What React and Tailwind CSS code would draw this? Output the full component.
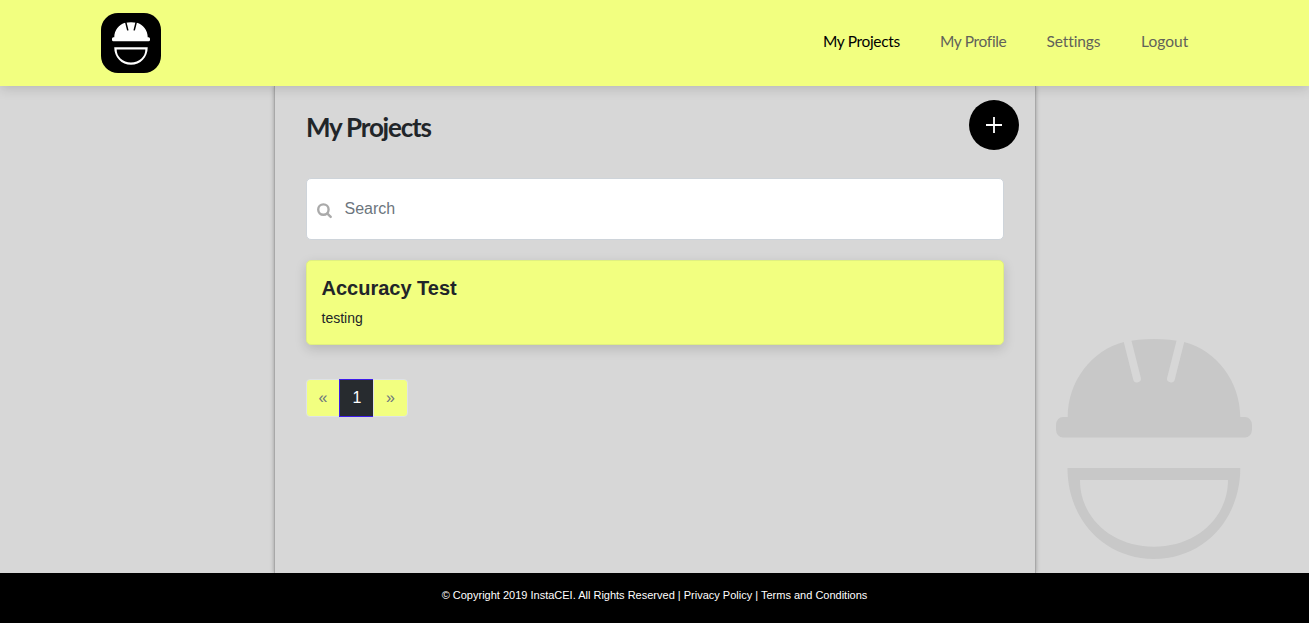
import React from "react";

const NAV = [
  { label: "My Projects", style: "w-[77px] text-black tracking-[-0.350px]" },
  { label: "My Profile", style: "w-[66.500px] text-[#61625a] tracking-[-0.350px]" },
  { label: "Settings", style: "w-[54.500px] text-[#61625a] tracking-[-0.100px]" },
  { label: "Logout", style: "w-[48px] text-[#61625a] tracking-[0.050px]" },
];

function Helmet({ className, slit }) {
  return (
    <svg viewBox="0 0 196 220" className={className} fill="currentColor" aria-hidden="true">
      <path d="M11.700 78C11.700 42 36 11 68 3Q82 0 98 0T128 3C160 11 184.300 42 184.300 78H189a7 8 0 0 1 7 8v4.500a7 8 0 0 1-7 8H7a7 8 0 0 1-7-8V86a7 8 0 0 1 7-8Z" />
      <path d="M70 -4 81 39.500M126 -4 115 39.500" fill="none" stroke={slit} strokeWidth="7.800" strokeLinecap="round" />
      <path fillRule="evenodd" d="M11.500 129H184.300C184.300 181 147 220 98 220S11.500 181 11.500 129ZM24 141C24 179 56 207.700 98 207.700S172 179 172 141Z" />
    </svg>
  );
}

export default function App() {
  return (
    <div className="flex h-[623px] flex-col overflow-hidden bg-[#d7d7d7] font-['Liberation_Sans',sans-serif] text-[#212529]">
      <header className="relative z-10 flex h-[86px] shrink-0 items-center justify-between bg-[#f2ff80] pr-[120px] pl-[101px] shadow-[0_2px_12px_rgba(0,0,0,0.16)]">
        <a className="flex size-[60px] items-center justify-center rounded-[17px] bg-black text-white">
          <Helmet className="h-[43px] w-[38px]" slit="#000" />
        </a>
        <nav className="flex gap-[40px] pb-[4px] font-['Lato',sans-serif] text-[15.500px] leading-6 whitespace-nowrap">
          {NAV.map((item) => (
            <a key={item.label} className={item.style}>{item.label}</a>
          ))}
        </nav>
      </header>

      <div className="flex min-h-0 flex-1">
        <div className="w-[274px] shrink-0" />
        <main className="w-[762px] shrink-0 border-x border-[#a8a8a8] pr-[31px] pl-[31px] shadow-[0_0_4px_rgba(0,0,0,0.28)]">
          <div className="-mr-[15px] flex h-[92px] items-start justify-between">
            <h1 className="pt-[23px] font-['Lato',sans-serif] text-[26px] leading-[36px] font-bold tracking-[-1.200px]">My Projects</h1>
            <button className="mt-[14px] flex size-[50px] items-center justify-center rounded-full bg-black text-white">
              <svg viewBox="0 0 16 16" className="size-4" fill="none" stroke="currentColor" strokeWidth="1.800" aria-hidden="true">
                <path d="M8 0v16M0 8h16" />
              </svg>
            </button>
          </div>
          <div className="flex h-[62px] items-center rounded-[5px] border border-[#ced4da] bg-white pl-[9.500px]">
            <svg viewBox="0 0 16 16" className="mt-[3px] size-4 text-[#aaa]" fill="none" stroke="currentColor" strokeWidth="2.400" aria-hidden="true">
              <circle cx="6.400" cy="6.600" r="5.200" />
              <path d="m10.400 10.600 3.300 3.300" strokeLinecap="round" />
            </svg>
            <span className="pb-[1px] pl-[12px] text-base text-[#6c757d]">Search</span>
          </div>
          <article className="mt-[20px] h-[85px] rounded-[5px] border border-[#e0f080] bg-[#f2ff80] px-[14.500px] pt-[15px] shadow-[0_4px_12px_rgba(0,0,0,0.15)]">
            <h2 className="text-xl leading-6 font-bold">Accuracy Test</h2>
            <p className="mt-[8px] text-sm leading-[21px]">testing</p>
          </article>
          <ul className="mt-[34px] flex h-[38px] w-[102px] text-base leading-[36px]">
            <li className="w-[34px] rounded-l-[4px] border border-[#dee2e6] bg-[#f2ff80] text-center text-[#6c757d]">«</li>
            <li className="relative -ml-px w-[34px] border border-r-0 border-[#3d1bea] bg-[#272b2f] pl-px text-center text-white">1</li>
            <li className="w-[35px] rounded-r-[4px] border border-[#dee2e6] bg-[#f2ff80] text-center text-[#6c757d]">»</li>
          </ul>
        </main>
        <aside className="flex flex-1 items-end pb-[14px] pl-[20px] text-[#c8c8c8]">
          <Helmet className="h-[220px] w-[196px]" slit="#d7d7d7" />
        </aside>
      </div>

      <footer className="relative z-10 flex h-[50px] shrink-0 items-center justify-center bg-black pb-[6px] text-[11px] whitespace-pre text-white">
        <span>© Copyright 2019 InstaCEI. All Rights Reserved | <a>Privacy Policy</a> | <a>Terms and Conditions</a></span>
      </footer>
    </div>
  );
}
